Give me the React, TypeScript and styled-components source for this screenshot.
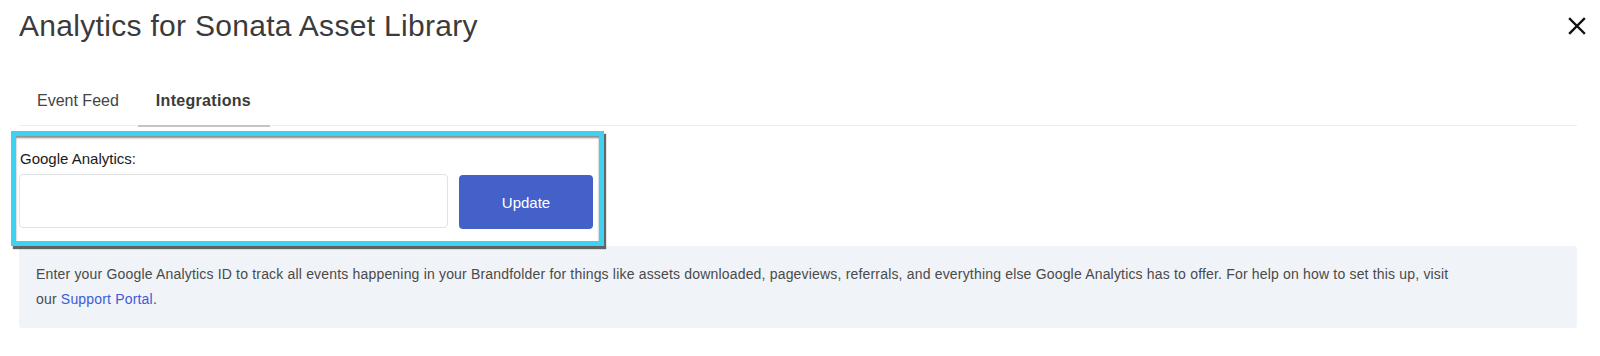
import React, { useState } from "react";
import styled, { createGlobalStyle } from "styled-components";

const GlobalStyle = createGlobalStyle`
  body {
    margin: 0;
    background: #ffffff;
    font-family: "Liberation Sans", Arial, sans-serif;
  }
`;

const Page = styled.div`
  width: 1600px;
  height: 356px;
  padding: 0 23px 0 19px;
  box-sizing: border-box;
  overflow: hidden;
`;

const Header = styled.div`
  display: flex;
  align-items: center;
  justify-content: space-between;
  padding-top: 8px;
  margin-right: -9px;
`;

const Title = styled.h1`
  margin: 0;
  font-size: 30px;
  line-height: 36px;
  font-weight: 400;
  color: #3b3b3b;
  letter-spacing: 0.3px;
`;

const CloseButton = styled.button`
  display: flex;
  padding: 0;
  border: none;
  background: none;
  cursor: pointer;
`;

const TabBar = styled.div`
  display: flex;
  margin-top: 33px;
  border-bottom: 1px solid #ececec;
`;

const Tab = styled.button<{ $active?: boolean }>`
  padding: 14px 19px 14px 18px;
  margin-bottom: -2px;
  border: none;
  border-bottom: 2px solid ${(p) => (p.$active ? "#c4c4c4" : "transparent")};
  background: none;
  font-family: inherit;
  font-size: 16px;
  line-height: 20px;
  font-weight: ${(p) => (p.$active ? 700 : 400)};
  letter-spacing: ${(p) => (p.$active ? "0.3px" : "0")};
  color: ${(p) => (p.$active ? "#3a3a3a" : "#444")};
  cursor: pointer;
`;

const FormSection = styled.div`
  position: relative;
  width: fit-content;
  margin-top: 23px;
`;

const Highlight = styled.div`
  position: absolute;
  top: -18px;
  left: -8px;
  right: -11px;
  bottom: -17px;
  border: 5px solid #3dd2f2;
  box-shadow: 2px 3px 1px rgba(0, 0, 0, 0.6), inset 0 2px 2px rgba(0, 0, 0, 0.45);
  pointer-events: none;
  z-index: 1;
`;

const Label = styled.label`
  display: block;
  font-size: 15px;
  line-height: 20px;
  color: #1a1a1a;
  margin-bottom: 5px;
  padding-left: 1px;
`;

const Row = styled.div`
  display: flex;
  gap: 11px;
`;

const Input = styled.input`
  width: 429px;
  height: 54px;
  box-sizing: border-box;
  border: 1px solid #e2e2e2;
  border-radius: 4px;
  padding: 0 12px;
  font-family: inherit;
  font-size: 15px;
  outline: none;
`;

const UpdateButton = styled.button`
  width: 134px;
  height: 54px;
  margin-top: 1px;
  border: none;
  border-radius: 4px;
  background: #4461ca;
  color: #ffffff;
  font-family: inherit;
  font-size: 15px;
  cursor: pointer;
`;

const InfoBox = styled.div`
  margin-top: 17px;
  padding: 16px 110px 16px 17px;
  background: #f0f3f8;
  border-radius: 3px;
  font-size: 14px;
  line-height: 25px;
  letter-spacing: 0.18px;
  color: #4a4a4a;
`;

const Link = styled.a`
  color: #3d5bd6;
  text-decoration: none;
`;

const CloseIcon = () => (
  <svg width="18" height="18" viewBox="0 0 18 18">
    <path d="M2 2 L16 16 M16 2 L2 16" stroke="#111" strokeWidth="2.4" strokeLinecap="square" />
  </svg>
);

const App = () => {
  const [tab, setTab] = useState("integrations");
  const [gaId, setGaId] = useState("");

  return (
    <Page>
      <GlobalStyle />
      <Header>
        <Title>Analytics for Sonata Asset Library</Title>
        <CloseButton aria-label="Close">
          <CloseIcon />
        </CloseButton>
      </Header>
      <TabBar>
        <Tab $active={tab === "feed"} onClick={() => setTab("feed")}>
          Event Feed
        </Tab>
        <Tab $active={tab === "integrations"} onClick={() => setTab("integrations")}>
          Integrations
        </Tab>
      </TabBar>
      <FormSection>
        <Highlight />
        <Label htmlFor="ga-id">Google Analytics:</Label>
        <Row>
          <Input id="ga-id" value={gaId} onChange={(e) => setGaId(e.target.value)} />
          <UpdateButton>Update</UpdateButton>
        </Row>
      </FormSection>
      <InfoBox>
        Enter your Google Analytics ID to track all events happening in your Brandfolder for things like
        assets downloaded, pageviews, referrals, and everything else Google Analytics has to offer. For help
        on how to set this up, visit our <Link href="#">Support Portal</Link>.
      </InfoBox>
    </Page>
  );
};

export default App;
